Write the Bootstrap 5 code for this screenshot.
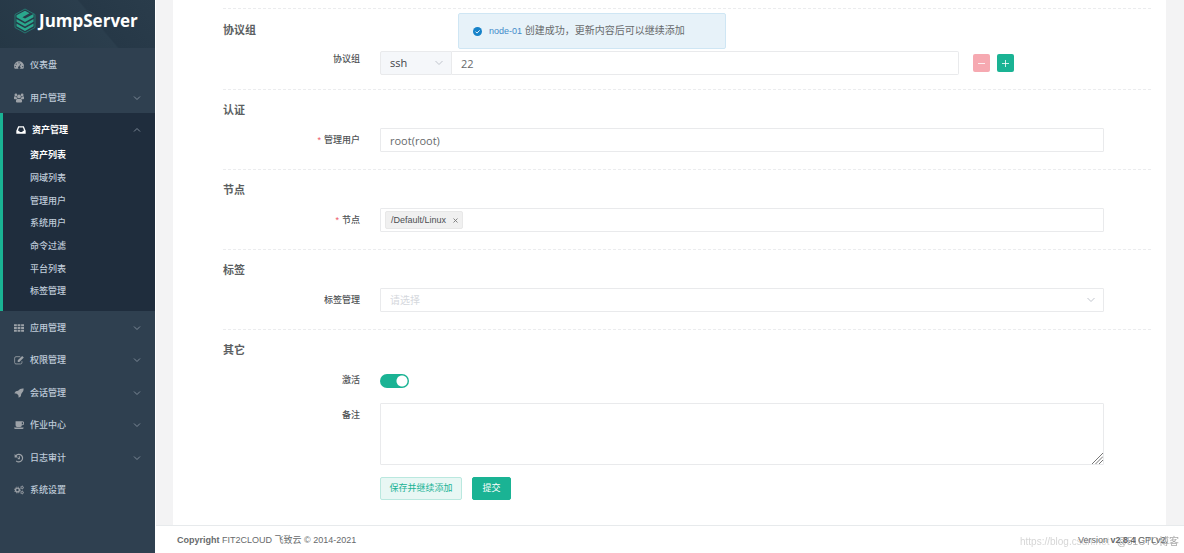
<!DOCTYPE html>
<html lang="zh-CN">
<head>
<meta charset="utf-8">
<meta name="viewport" content="width=device-width, initial-scale=1">
<title>JumpServer</title>
<link href="https://cdn.jsdelivr.net/npm/bootstrap@5.3.0/dist/css/bootstrap.min.css" rel="stylesheet">
<style>
:root { --js-green: #1ab394; --js-side: #2f4050; --js-line: #e9eaec; }
body { font: 9px/18px "Liberation Sans", "Noto Sans CJK SC", sans-serif; color: #676a6c; background: #f3f3f4; }
a { text-decoration: none; }
.sidebar { width: 155px; background: var(--js-side); }
.brand { height: 48px; padding: 0 14px 6px; gap: 3px; color: #fff; background: linear-gradient(50deg, #253745 0%, #2b3e4d 60%, #263847 61%, #2a3c4b 100%); font: bold 17px/24px "Open Sans", sans-serif; }
.menu > li { height: 32px; }
.menu > li:nth-child(odd) { height: 33px; }
.menu > li.opened { height: auto; padding-bottom: 8px; background: #1f2d3d; box-shadow: inset 3px 0 var(--js-green); }
.menu-link { height: 34px; padding: 0 14px; color: #bfcbd9; font-weight: 500; }
.menu-link svg { width: 10px; height: 10px; margin-right: 6px; fill: #9da2a8; color: #9da2a8; }
.menu-link svg.caret { width: 8px; height: 8px; margin: 0 0 0 auto; fill: none; color: #83909e; }
.opened > .menu-link { color: #fff; font-weight: 700; padding-left: 16px; margin-bottom: -3px; }
.opened > .menu-link svg:first-child { fill: #fff; }
.opened > .menu-link svg.caret { color: #83909e; }
.submenu a { display: block; height: 23px; line-height: 23px; padding-left: 30px; color: #bfcbd9; font-weight: 500; }
.submenu li:nth-child(3n) a { height: 22px; }
.submenu a.current { color: #fff; font-weight: 700; }
.page { border-left: 1px solid #fff; }
.panel { margin: 0 18px 0 17px; padding: 8px 15px 25px 50px; background: #fff; }
.sect { border-top: 1px dashed #ebecee; padding-bottom: 17px; }
.sect:last-child { padding-bottom: 0; }
.sect h2 { margin: 11px 0 9px; font-size: 11px; line-height: 18px; font-weight: 700; color: #5c5f62; }
.sect.first { padding-bottom: 14px; }
.sect.first h2 { margin: 12px 0; }
.form-line { gap: 20px; margin-right: 47px; }
.remark-line { margin: 11px 47px 12px 0; }
.form-line > label, .form-line > .tag-for { flex: 0 0 137px; text-align: right; line-height: 24px; font-weight: 500; color: #4f5255; }
.form-line.first-line > label { line-height: 16px; }
.form-line .req { color: #ed5565; margin-right: 3px; }
.field, .form-control.field, .form-select.field { height: 24px; padding: 0 9px; border: 1px solid var(--js-line); border-radius: 1px; font: 11px/22px "Open Sans", "Noto Sans CJK SC", sans-serif; color: #676a6c; background-color: #fff; }
.form-select.field { background-image: url("data:image/svg+xml,%3Csvg xmlns='http://www.w3.org/2000/svg' viewBox='0 0 8 8' fill='none' stroke='%23c0c4cc'%3E%3Cpath d='M.5 2 4 5.500 7.500 2'/%3E%3C/svg%3E"); background-size: 8px 8px; background-position: right 8px center; }
.form-select.placeholder-select { color: #d5d8dd; font-size: 10px; }
.form-select.proto { flex: 0 0 72px; width: 72px; background-color: #f5f7fa; color: #3f4346; border-radius: 2px 0 0 2px; }
.form-control.port { border-left: 0; border-radius: 0 2px 2px 0; }
.port-group { flex: 0 0 80%; }
.btn.mini { width: 17px; height: 18px; padding: 0; border: 0; border-radius: 2px; color: #fff; margin-top: 3px; }
.btn.mini svg { width: 9px; height: 9px; }
.btn.minus { background: #f6a9b1; margin-left: 14px; }
.btn.plus { background: var(--js-green); margin-left: 7px; }
.node-tag { height: 18px; padding: 0 4px 0 5px; gap: 7px; border: 1px solid #e8e8e8; border-radius: 2px; background: #f0f0f0; color: #4c4f52; font: 9px/16px "Liberation Sans", sans-serif; }
.node-tag button { border: 0; padding: 0; background: none; color: #777; display: flex; }
.form-check-input.toggle { width: 29px; height: 14px; margin: 6px 0 4px; border: 0; border-radius: 7px; background-color: var(--js-green); background-image: radial-gradient(circle at 22px 7px, #fff 5px, transparent 6px); appearance: none; }
.form-control.remark { height: 62px; display: block; resize: none; }
.grip { position: absolute; right: 1px; bottom: 1px; width: 11px; height: 11px; pointer-events: none; }
.btn.act { height: 23px; padding: 0 8px; border-radius: 2px; font-size: 9px; line-height: 21px; }
.btn.more { min-width: 82px; background: #e8f7f4; border-color: #bae8df; color: var(--js-green); }
.btn.send { min-width: 39px; background: var(--js-green); border-color: var(--js-green); color: #fff; }
.actions { gap: 10px; }
.foot { height: 28px; padding: 0 16px 0 21px; background: #fff; border-top: 1px solid #e7eaec; }
.note { position: fixed; top: 13px; left: 50%; width: 268px; height: 36px; margin-left: -134px; padding: 0 14px; gap: 7px; border: 1px solid #cfe6f4; border-radius: 2px; background: #e7f2f9; font-size: 10px; z-index: 5; }
.note a { color: #428bca; font-size: 9px; }
.mark-line { position: fixed; right: 5px; bottom: 2px; width: 159px; font-size: 10px; color: rgba(150,150,150,.4); pointer-events: none; }
.mark-line span:last-child { color: rgba(110,110,110,.6); }
</style>
</head>
<body>
<svg class="d-none">
  <symbol id="down" viewBox="0 0 8 8"><path d="M1 2.500 4 5.500 7 2.500" fill="none" stroke="currentColor" stroke-width=".9"/></symbol>
  <symbol id="up" viewBox="0 0 8 8"><path d="M1 5.500 4 2.500 7 5.500" fill="none" stroke="currentColor" stroke-width=".9"/></symbol>
</svg>
<div class="d-flex min-vh-100">
  <aside class="sidebar flex-shrink-0">
    <a href="#" class="brand d-flex align-items-center">
      <svg class="flex-shrink-0" width="22" height="26" viewBox="0 0 22 26"><path d="M11 1 21 6.500V19.500L11 25 1 19.500V6.500Z" fill="none" stroke="#25877a" stroke-width=".8"/><g fill="#2aa78d"><path d="M11 2.800 15.500 5.300 8.500 9.200 11 10.600 19.500 6v3.200L11 14 2.500 9.200V7.300Z"/><path d="M2.500 11 11 15.700 19.500 11v2.700L11 18.500 2.500 13.700Z"/><path d="M2.500 15.500 11 20.200 19.500 15.500v2.700L11 23 2.500 18.200Z"/></g></svg>
      <span>JumpServer</span>
    </a>
    <ul class="menu list-unstyled m-0">
      <li><a href="#" class="menu-link d-flex align-items-center"><svg viewBox="0 0 16 16"><path fill-rule="evenodd" d="M8 2a8 8 0 0 0-8 8c0 1.500.4 3 1.200 4h13.600c.8-1 1.200-2.500 1.200-4a8 8 0 0 0-8-8ZM8 3.500a1 1 0 1 1 0 2 1 1 0 0 1 0-2ZM3.500 5.500a1 1 0 1 1 0 2 1 1 0 0 1 0-2ZM2 9.500a1 1 0 1 1 0 2 1 1 0 0 1 0-2ZM14 9.500a1 1 0 1 1 0 2 1 1 0 0 1 0-2ZM10 6l1 .3-1.500 4a2 2 0 1 1-1-.3Z"/></svg>仪表盘</a></li>
      <li><a href="#" class="menu-link d-flex align-items-center"><svg viewBox="0 0 16 16"><circle cx="3" cy="3" r="2.200"/><circle cx="13" cy="3" r="2.200"/><circle cx="8" cy="5.500" r="3"/><path d="M0 9V6.500Q0 5 1.500 5.500H4Q4 7.500 5.500 9 4 9.200 3.500 10H1ZM16 9V6.500Q16 5 14.500 5.500H12Q12 7.500 10.500 9q1.500.2 2 1H15ZM3 13q0-4 3-4 2 1.200 4 0 3 0 3 4 0 2-2 2H5q-2 0-2-2Z"/></svg>用户管理<svg class="caret"><use href="#down"/></svg></a></li>
      <li class="opened">
        <a href="#" class="menu-link d-flex align-items-center"><svg viewBox="0 0 16 16"><path fill-rule="evenodd" d="M3.500 2h9L15.500 9v4.500q0 .5-.5.500H1q-.5 0-.5-.5V9ZM4.900 4 3 9H5l1 2h4l1-2h2l-1.900-5Z"/></svg>资产管理<svg class="caret"><use href="#up"/></svg></a>
        <ul class="submenu list-unstyled m-0">
          <li><a href="#" class="current">资产列表</a></li>
          <li><a href="#">网域列表</a></li>
          <li><a href="#">管理用户</a></li>
          <li><a href="#">系统用户</a></li>
          <li><a href="#">命令过滤</a></li>
          <li><a href="#">平台列表</a></li>
          <li><a href="#">标签管理</a></li>
        </ul>
      </li>
      <li><a href="#" class="menu-link d-flex align-items-center"><svg viewBox="0 0 16 16"><path d="M0 2h4.500v3.300H0ZM5.700 2h4.500v3.300H5.700ZM11.400 2H16v3.300h-4.600ZM0 6.400h4.500v3.300H0ZM5.700 6.400h4.500v3.300H5.700ZM11.400 6.400H16v3.300h-4.600ZM0 10.800h4.500v3.300H0ZM5.700 10.800h4.500v3.300H5.700ZM11.400 10.800H16v3.300h-4.600Z"/></svg>应用管理<svg class="caret"><use href="#down"/></svg></a></li>
      <li><a href="#" class="menu-link d-flex align-items-center"><svg viewBox="0 0 16 16"><path d="M10 2.700H3.200Q1 2.700 1 5v7q0 2.300 2.200 2.300h7.300q2.200 0 2.200-2.300v-2" fill="none" stroke="currentColor" stroke-width="1.300"/><path d="m6 8.500 7-7L15.700 4l-7.200 7H6Z"/></svg>权限管理<svg class="caret"><use href="#down"/></svg></a></li>
      <li><a href="#" class="menu-link d-flex align-items-center"><svg viewBox="0 0 16 16"><path d="M15.500.8Q16 6 11.500 9.500L11 13l-3.500 2.500-.5-4L4.500 9l-4-.5L3 5l3.500-.5Q10 0 15.500.8Z"/></svg>会话管理<svg class="caret"><use href="#down"/></svg></a></li>
      <li><a href="#" class="menu-link d-flex align-items-center"><svg viewBox="0 0 16 16"><path fill-rule="evenodd" d="M2.500 2H13a3 3 0 0 1 0 6.500h-.5Q12.500 11 10 11H5Q2.500 11 2.500 8.500ZM12.500 3.500V7h.5a1.700 1.700 0 0 0 0-3.500ZM0 12h15.500Q15 14.500 13.500 14.500H2Q.5 14.500 0 12Z"/></svg>作业中心<svg class="caret"><use href="#down"/></svg></a></li>
      <li><a href="#" class="menu-link d-flex align-items-center"><svg viewBox="0 0 16 16"><path d="M3 4.500A6 6 0 1 1 3.500 12.500M8.500 5v4H6" fill="none" stroke="currentColor" stroke-width="1.900"/><path d="M1 1.500V7h5.500Z"/></svg>日志审计<svg class="caret"><use href="#down"/></svg></a></li>
      <li><a href="#" class="menu-link d-flex align-items-center"><svg viewBox="0 0 16 16"><g fill="none" stroke="currentColor"><circle cx="5.500" cy="8" r="3" stroke-width="2.200"/><circle cx="5.500" cy="8" r="4.700" stroke-width="1.400" stroke-dasharray="1.850"/><circle cx="13" cy="4" r="1.700" stroke-width="1.400"/><circle cx="13" cy="4" r="2.600" stroke-dasharray="1.360"/><circle cx="13" cy="12" r="1.700" stroke-width="1.400"/><circle cx="13" cy="12" r="2.600" stroke-dasharray="1.360"/></g></svg>系统设置</a></li>
    </ul>
  </aside>
  <div class="page d-flex flex-column flex-grow-1">
    <main class="panel flex-grow-1">
      <form>
        <section class="sect first">
          <h2>协议组</h2>
          <div class="form-line first-line d-flex">
            <label for="port">协议组</label>
            <div class="d-flex flex-grow-1">
              <div class="port-group d-flex">
                <select class="form-select field proto" aria-label="协议"><option>ssh</option></select>
                <input id="port" class="form-control field port" type="text" value="22">
              </div>
              <button type="button" class="btn mini minus d-flex align-items-center justify-content-center" aria-label="删除"><svg viewBox="0 0 9 9"><path d="M1 4.500h7" stroke="#fff" stroke-width=".8"/></svg></button>
              <button type="button" class="btn mini plus d-flex align-items-center justify-content-center" aria-label="添加"><svg viewBox="0 0 9 9"><path d="M1 4.500h7M4.500 1v7" stroke="#fff" stroke-width=".8"/></svg></button>
            </div>
          </div>
        </section>
        <section class="sect">
          <h2>认证</h2>
          <div class="form-line d-flex">
            <label for="admin"><span class="req">*</span>管理用户</label>
            <input id="admin" class="form-control field" type="text" value="root(root)">
          </div>
        </section>
        <section class="sect">
          <h2>节点</h2>
          <div class="form-line d-flex">
            <span class="tag-for"><span class="req">*</span>节点</span>
            <div class="field flex-grow-1 d-flex align-items-center px-1">
              <span class="node-tag d-flex align-items-center">/Default/Linux<button type="button" aria-label="移除"><svg width="5" height="5" viewBox="0 0 5 5"><path d="m.5.5 4 4m0-4-4 4" stroke="currentColor" stroke-width=".9"/></svg></button></span>
            </div>
          </div>
        </section>
        <section class="sect">
          <h2>标签</h2>
          <div class="form-line d-flex">
            <label for="tags">标签管理</label>
            <select id="tags" class="form-select field placeholder-select"><option>请选择</option></select>
          </div>
        </section>
        <section class="sect">
          <h2>其它</h2>
          <div class="form-line d-flex">
            <label for="active">激活</label>
            <input id="active" class="form-check-input toggle" type="checkbox" role="switch" checked>
          </div>
          <div class="form-line remark-line d-flex">
            <label for="remark">备注</label>
            <div class="position-relative flex-grow-1">
              <textarea id="remark" class="form-control field remark"></textarea>
              <svg class="grip" viewBox="0 0 11 11"><path d="M0 11 11 0M3.500 11 11 3.500M7 11l4-4" stroke="#666" stroke-width=".9"/></svg>
            </div>
          </div>
          <div class="form-line d-flex">
            <span class="tag-for"></span>
            <div class="actions d-flex">
              <button type="button" class="btn act more">保存并继续添加</button>
              <button type="submit" class="btn act send">提交</button>
            </div>
          </div>
        </section>
      </form>
    </main>
    <footer class="foot d-flex align-items-center justify-content-between">
      <span><strong>Copyright</strong> FIT2CLOUD 飞致云 © 2014-2021</span>
      <span>Version <strong>v2.8.4</strong> GPLv2.</span>
    </footer>
  </div>
</div>
<div class="note d-flex align-items-center" role="alert">
  <svg width="9" height="9" viewBox="0 0 9 9"><circle cx="4.500" cy="4.500" r="4.500" fill="#1682c9"/><path d="m2.500 4.600 1.500 1.500 2.700-2.800" fill="none" stroke="#fff" stroke-width=".9"/></svg>
  <span><a href="#">node-01</a> 创建成功，更新内容后可以继续添加</span>
</div>
<div class="mark-line d-flex justify-content-between"><span>https://blog.csdn.net</span><span>@51CTO博客</span></div>
</body>
</html>
